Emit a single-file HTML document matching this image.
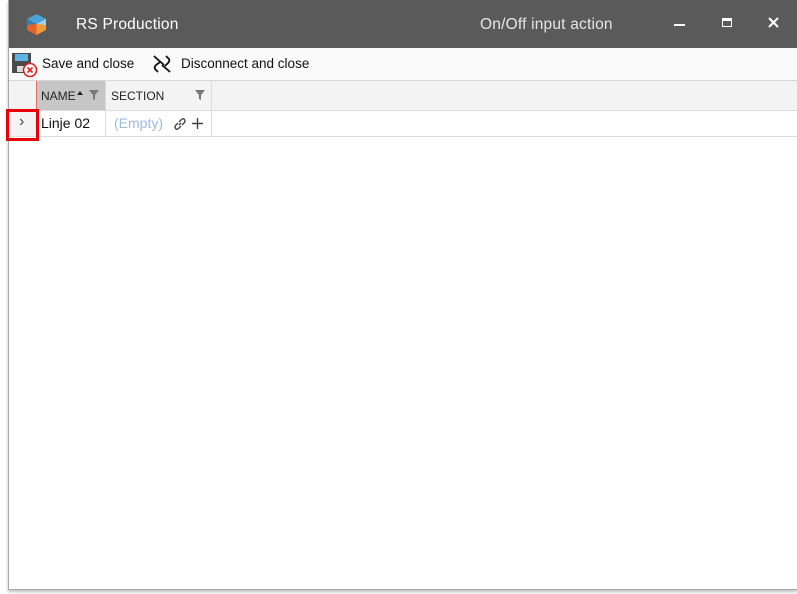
<!DOCTYPE html>
<html><head><meta charset="utf-8"><style>
*{margin:0;padding:0;box-sizing:border-box}
body{width:797px;height:594px;background:#fff;font-family:"Segoe UI","Liberation Sans",sans-serif;position:relative;overflow:hidden}
.win{position:absolute;left:8px;top:0;width:789px;height:590px;background:#fff;border-left:1px solid #a8a8a8;border-bottom:1px solid #a8a8a8;box-shadow:0 2px 3px rgba(0,0,0,.25)}
.title{position:absolute;left:0;top:0;width:789px;height:48px;background:#5a5a5a;color:#fff}
.t1{position:absolute;left:67px;top:16px;font-size:15.5px;letter-spacing:0.2px}
.t2{position:absolute;left:471px;top:16px;font-size:15.5px;color:#e6e6e6;letter-spacing:0.2px}
.tb{position:absolute;left:0;top:48px;width:789px;height:33px;background:#fafafa;border-bottom:1px solid #d8d8d8;font-size:13.5px;color:#111}
.abs{position:absolute}
.hdr{position:absolute;left:0;top:81px;width:789px;height:30px;background:#f3f3f3;border-bottom:1px solid #dcdcdc;font-size:12px;color:#222}
.row{position:absolute;left:0;top:111px;width:789px;height:26px;border-bottom:1px solid #dcdcdc;font-size:14px}
</style></head><body>
<div class="win">
 <div class="title">
  <svg class="abs" style="left:17px;top:13px" width="21" height="23" viewBox="0 0 21 23">
   <polygon points="10.5,1 20,6 10.5,11 1,6" fill="#4aa3d8"/>
   <polygon points="1,6 10.5,11 10.5,22 1,17" fill="#e8632a"/>
   <polygon points="20,6 10.5,11 10.5,22 20,17" fill="#f39a3a"/>
   <polygon points="1,6 10.5,11 1,12" fill="#2f7fb8"/>
   <polygon points="20,6 10.5,11 20,12" fill="#9fd1ef"/>
  </svg>
  <div class="t1">RS Production</div>
  <div class="t2">On/Off input action</div>
  <div class="abs" style="left:665px;top:24px;width:11px;height:2px;background:#fff"></div>
  <div class="abs" style="left:713px;top:18px;width:10px;height:9px;border:1.5px solid #fff;border-top-width:3px"></div>
  <svg class="abs" style="left:759px;top:17px" width="11" height="11"><path d="M1 1L10 10M10 1L1 10" stroke="#fff" stroke-width="2"/></svg>
 </div>
 <div class="tb">
  <svg class="abs" style="left:2px;top:4px" width="27" height="26" viewBox="0 0 27 26">
   <rect x="1" y="1" width="19" height="20" fill="#4a4a4a"/>
   <rect x="4" y="2" width="13" height="7" fill="#5cb3e6"/>
   <rect x="6" y="14" width="8" height="6" fill="#ddd"/>
   <circle cx="19" cy="18" r="6.5" fill="#fff" stroke="#e02020" stroke-width="1.6"/>
   <path d="M16.5 15.5L21.5 20.5M21.5 15.5L16.5 20.5" stroke="#e02020" stroke-width="1.6"/>
  </svg>
  <div class="abs" style="left:33px;top:8px">Save and close</div>
  <svg class="abs" style="left:142px;top:5px" width="22" height="22" viewBox="0 0 22 22" fill="none" stroke="#111" stroke-width="1.8">
   <path d="M3 3C7 7 11 10 13 12M19 19C16 16 13 14 11 12"/>
   <path d="M7 19L4 16Q3 14 5 12L9 9M15 3L18 6Q19 8 17 10L14 13"/>
  </svg>
  <div class="abs" style="left:172px;top:8px">Disconnect and close</div>
 </div>
 <div class="hdr">
  <div class="abs" style="left:27px;top:0;width:1px;height:30px;background:#e07060"></div>
  <div class="abs" style="left:28px;top:0;width:68px;height:29px;background:#c6c6c6"></div>
  <div class="abs" style="left:32px;top:8px">NAME</div>
  <div class="abs" style="left:68px;top:10px;width:0;height:0;border-left:3px solid transparent;border-right:3px solid transparent;border-bottom:4px solid #222"></div>
  <svg class="abs" style="left:80px;top:9px" width="10" height="10"><path d="M0 0H10L6 5V10L4 9V5Z" fill="#777"/></svg>
  <div class="abs" style="left:96px;top:0;width:1px;height:30px;background:#dcdcdc"></div>
  <div class="abs" style="left:102px;top:8px">SECTION</div>
  <svg class="abs" style="left:186px;top:9px" width="10" height="10"><path d="M0 0H10L6 5V10L4 9V5Z" fill="#777"/></svg>
  <div class="abs" style="left:202px;top:0;width:1px;height:30px;background:#dcdcdc"></div>
 </div>
 <div class="row">
  <div class="abs" style="left:0;top:0;width:28px;height:25px;background:#f3f3f3"></div>
  <div class="abs" style="left:10px;top:2px;font-size:16px;color:#444">›</div>
  <div class="abs" style="left:32px;top:4px;color:#111">Linje 02</div>
  <div class="abs" style="left:96px;top:0;width:1px;height:26px;background:#dcdcdc"></div>
  <div class="abs" style="left:105px;top:4px;color:#9bbbe0">(Empty)</div>
  <svg class="abs" style="left:164px;top:6px" width="14" height="14" viewBox="0 0 14 14" fill="none" stroke="#444" stroke-width="1.4"><path d="M6 8L8 6M5 6L3 8Q1 10 3 12Q4 13 6 11L8 9M9 8L11 6Q13 4 11 2Q10 1 8 3L6 5"/></svg>
  <svg class="abs" style="left:183px;top:7px" width="11" height="11"><path d="M5.5 0V11M0 5.5H11" stroke="#444" stroke-width="1.4"/></svg>
  <div class="abs" style="left:202px;top:0;width:1px;height:26px;background:#dcdcdc"></div>
 </div>
</div>
<div class="abs" style="left:6px;top:109px;width:33px;height:32px;border:3px solid #e8000b"></div>
</body></html>
